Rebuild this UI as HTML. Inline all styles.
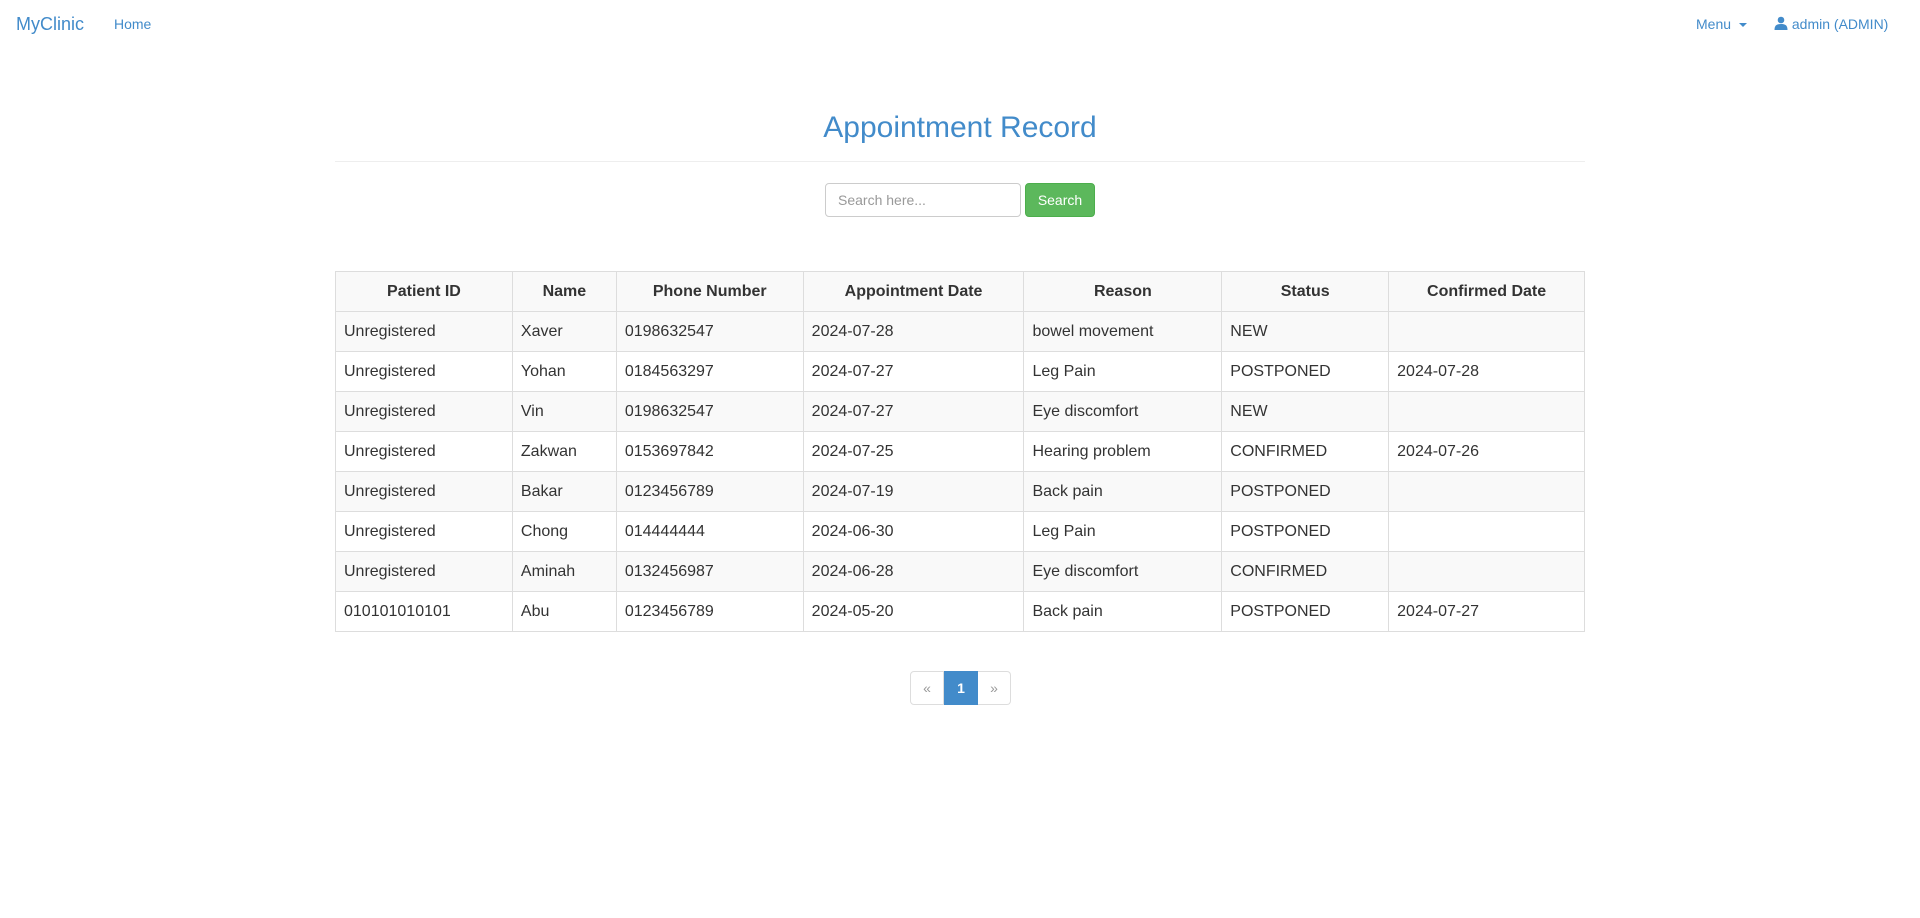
<!DOCTYPE html>
<html><head><meta charset="utf-8"><style>
*{box-sizing:border-box;margin:0;padding:0}
body{width:1920px;height:918px;background:#fff;font-family:"Liberation Sans",Arial,sans-serif;color:#333;position:relative;overflow:hidden}
a{color:#428bca;text-decoration:none}
.abs{position:absolute;white-space:nowrap}
.brand{left:16px;top:13px;font-size:18px;line-height:22px}
.nav{font-size:14px;line-height:20px;top:14px}
h2{position:absolute;left:0;width:1920px;text-align:center;top:108px;font-size:30px;font-weight:normal;color:#428bca;line-height:40px}
.hr{position:absolute;left:335px;width:1250px;top:161px;border-top:1px solid #eee}
.inp{position:absolute;left:825px;top:183px;width:196px;height:34px;border:1px solid #ccc;border-radius:4px;font-size:14px;color:#999;padding:7px 12px;line-height:18px}
.btn{position:absolute;left:1025px;top:183px;width:70px;height:34px;background:#5cb85c;border:1px solid #4cae4c;border-radius:4px;color:#fff;font-size:14px;text-align:center;line-height:32px}
table{position:absolute;left:335px;top:271px;width:1250px;border-collapse:collapse;font-size:16px}
td,th{border:1px solid #ddd;height:40px;padding:0 8px;text-align:left;line-height:22px}
th{text-align:center;font-weight:bold;background:#f9f9f9}
tr:nth-child(even) td{background:#f9f9f9}
.pg{position:absolute;top:671px;left:910px;height:34px;display:flex;font-size:14px}
.pg div{height:34px;line-height:32px;text-align:center;border:1px solid #ddd;color:#999}
</style></head><body>
<a class="abs brand" href="#">MyClinic</a>
<a class="abs nav" style="left:114px" href="#">Home</a>
<a class="abs nav" style="left:1696px" href="#">Menu <span style="display:inline-block;width:0;height:0;border-left:4px solid transparent;border-right:4px solid transparent;border-top:4px solid #428bca;vertical-align:middle;margin-left:4px"></span></a>
<a class="abs nav" style="left:1774px" href="#"><svg width="14" height="14" viewBox="0 0 14 14" style="vertical-align:-1px"><circle cx="7" cy="4" r="3.3" fill="#428bca"/><path d="M0.5 14 C0.5 9 3 8 7 8 C11 8 13.5 9 13.5 14 Z" fill="#428bca"/></svg> admin (ADMIN)</a>
<h2>Appointment Record</h2>
<div class="hr"></div>
<div class="inp">Search here...</div>
<div class="btn">Search</div>
<table>
<colgroup><col style="width:177px"><col style="width:104px"><col style="width:187px"><col style="width:221px"><col style="width:198px"><col style="width:167px"><col style="width:196px"></colgroup>
<tr><th>Patient ID</th><th>Name</th><th>Phone Number</th><th>Appointment Date</th><th>Reason</th><th>Status</th><th>Confirmed Date</th></tr>
<tr><td>Unregistered</td><td>Xaver</td><td>0198632547</td><td>2024-07-28</td><td>bowel movement</td><td>NEW</td><td></td></tr>
<tr><td>Unregistered</td><td>Yohan</td><td>0184563297</td><td>2024-07-27</td><td>Leg Pain</td><td>POSTPONED</td><td>2024-07-28</td></tr>
<tr><td>Unregistered</td><td>Vin</td><td>0198632547</td><td>2024-07-27</td><td>Eye discomfort</td><td>NEW</td><td></td></tr>
<tr><td>Unregistered</td><td>Zakwan</td><td>0153697842</td><td>2024-07-25</td><td>Hearing problem</td><td>CONFIRMED</td><td>2024-07-26</td></tr>
<tr><td>Unregistered</td><td>Bakar</td><td>0123456789</td><td>2024-07-19</td><td>Back pain</td><td>POSTPONED</td><td></td></tr>
<tr><td>Unregistered</td><td>Chong</td><td>014444444</td><td>2024-06-30</td><td>Leg Pain</td><td>POSTPONED</td><td></td></tr>
<tr><td>Unregistered</td><td>Aminah</td><td>0132456987</td><td>2024-06-28</td><td>Eye discomfort</td><td>CONFIRMED</td><td></td></tr>
<tr><td>010101010101</td><td>Abu</td><td>0123456789</td><td>2024-05-20</td><td>Back pain</td><td>POSTPONED</td><td>2024-07-27</td></tr>
</table>
<div class="pg">
<div style="width:34px;border-radius:4px 0 0 4px">«</div>
<div style="width:34px;background:#428bca;border-color:#428bca;color:#fff;font-weight:bold">1</div>
<div style="width:33px;border-radius:0 4px 4px 0;border-left:none">»</div>
</div>
</body></html>
